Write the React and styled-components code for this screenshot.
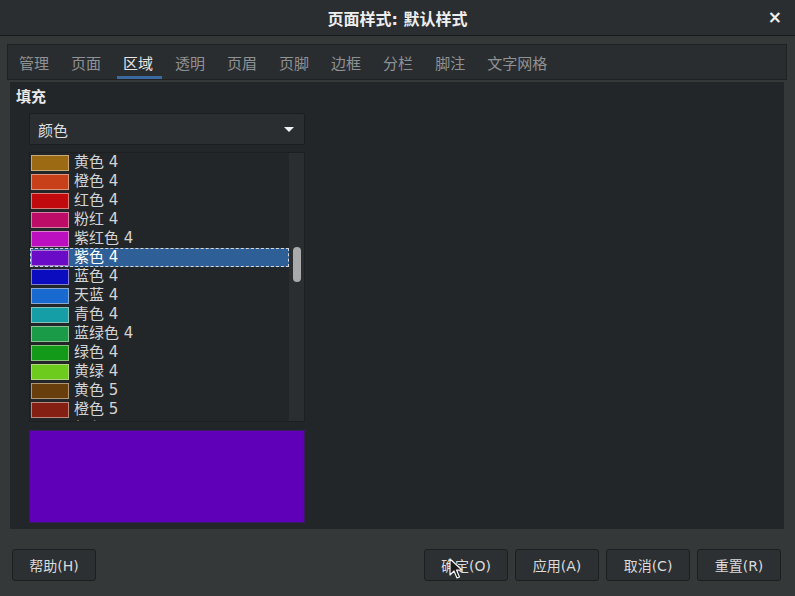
import React from "react";
import styled, { createGlobalStyle } from "styled-components";

const Global = createGlobalStyle`
  html, body { margin: 0; padding: 0; background: #353839; }
  body { font-family: "DejaVu Sans", "Noto Sans CJK SC", sans-serif; }
  * { box-sizing: border-box; }
`;

const Window = styled.div`
  position: relative;
  width: 795px;
  height: 596px;
  background: #353839;
  overflow: hidden;
  display: flex;
  flex-direction: column;
`;

const TitleBar = styled.div`
  height: 36px;
  flex: none;
  background: #2b2e31;
  border-bottom: 1px solid #17191b;
  display: flex;
  align-items: center;
  justify-content: center;
  position: relative;
  color: #eeeeee;
  font-weight: 700;
  font-size: 16px;
`;

const Close = styled.div`
  position: absolute;
  right: 13px;
  top: 8px;
  font-size: 17px;
  font-weight: 700;
  color: #f0f0f0;
  line-height: 18px;
`;

const Tabs = styled.div`
  margin: 8px 8px 0 7px;
  height: 36px;
  flex: none;
  border: 1px solid #1f2123;
  background: #2a2d30;
  display: flex;
  align-items: stretch;
`;

const Tab = styled.div`
  position: relative;
  padding: 1px 11px 0 11px;
  display: flex;
  align-items: center;
  font-size: 15px;
  color: ${(p) => (p.$active ? "#e6e6e6" : "#8f9295")};
  &::after {
    content: "";
    display: ${(p) => (p.$active ? "block" : "none")};
    position: absolute;
    left: 5px;
    right: 2px;
    bottom: 0;
    height: 3px;
    background: #3b6aa0;
  }
`;

const Panel = styled.div`
  margin: 2px 11px 0 10px;
  height: 447px;
  flex: none;
  background: #232629;
  padding: 4px 0 0 6px;
  display: flex;
  flex-direction: column;
`;

const Heading = styled.div`
  font-size: 15px;
  font-weight: 700;
  color: #e8e8e8;
  line-height: 22px;
`;

const Column = styled.div`
  margin: 5px 0 0 13px;
  width: 276px;
  display: flex;
  flex-direction: column;
`;

const Select = styled.div`
  height: 32px;
  border: 1px solid #1b1d1f;
  border-radius: 2px;
  background: #2b2e31;
  display: flex;
  align-items: center;
  justify-content: space-between;
  padding: 0 10px 0 8px;
  font-size: 15px;
  color: #dedede;
`;

const Caret = styled.div`
  width: 0;
  height: 0;
  border-left: 5px solid transparent;
  border-right: 5px solid transparent;
  border-top: 5px solid #f2f2f2;
`;

const List = styled.div`
  margin-top: 7px;
  height: 270px;
  border: 1px solid #1c1e20;
  background: #232629;
  display: flex;
  overflow: hidden;
`;

const Rows = styled.div`
  flex: 1;
  display: flex;
  flex-direction: column;
  overflow: hidden;
`;

const Row = styled.div`
  height: 19px;
  flex: none;
  display: flex;
  align-items: center;
  font-size: 15px;
  line-height: 19px;
  color: ${(p) => (p.$selected ? "#ffffff" : "#d4d4d4")};
  background: ${(p) => (p.$selected ? "#2f5f97" : "transparent")};
  outline: ${(p) => (p.$selected ? "1px dashed #d8d8d8" : "none")};
  outline-offset: -1px;
  white-space: nowrap;
`;

const Swatch = styled.div`
  width: 38px;
  height: 16px;
  flex: none;
  margin: 0 5px 0 1px;
  border: 1px solid rgba(235, 220, 205, 0.55);
  background: ${(p) => p.$c};
`;

const Scroll = styled.div`
  width: 15px;
  flex: none;
  background: #2b2e31;
  position: relative;
`;

const Thumb = styled.div`
  position: absolute;
  left: 4px;
  top: 94px;
  width: 8px;
  height: 35px;
  border-radius: 4px;
  background: #a8aaac;
`;

const Preview = styled.div`
  margin-top: 8px;
  height: 93px;
  background: ${(p) => p.$c};
  border: 1px solid #3b1a63;
`;

const Footer = styled.div`
  flex: 1;
  display: flex;
  align-items: flex-start;
  padding: 20px 14px 0 12px;
  gap: 7px;
`;

const Spacer = styled.div`
  flex: 1;
`;

const Button = styled.div`
  width: 84px;
  height: 32px;
  border: 1px solid #1c1e20;
  border-radius: 3px;
  background: #2d3033;
  display: flex;
  align-items: center;
  justify-content: center;
  font-size: 14px;
  color: #dadada;
`;

const Cursor = styled.svg`
  position: absolute;
  left: 449px;
  top: 558px;
`;

const colors = [
  ["黄色 4", "#9c6a12"],
  ["橙色 4", "#c8401a"],
  ["红色 4", "#c00a0e"],
  ["粉红 4", "#bd0c68"],
  ["紫红色 4", "#bb0fc0"],
  ["紫色 4", "#6a0bc7"],
  ["蓝色 4", "#0b0bbf"],
  ["天蓝 4", "#186ad0"],
  ["青色 4", "#169ea6"],
  ["蓝绿色 4", "#199b48"],
  ["绿色 4", "#139a19"],
  ["黄绿 4", "#6dcb1e"],
  ["黄色 5", "#683e0d"],
  ["橙色 5", "#832013"],
  ["红色 5", "#7a0a0c"],
];

const tabs = ["管理", "页面", "区域", "透明", "页眉", "页脚", "边框", "分栏", "脚注", "文字网格"];

export default function App() {
  return (
    <Window>
      <Global />
      <TitleBar>
        页面样式: 默认样式
        <Close>×</Close>
      </TitleBar>
      <Tabs>
        {tabs.map((t) => (
          <Tab key={t} $active={t === "区域"}>
            {t}
          </Tab>
        ))}
      </Tabs>
      <Panel>
        <Heading>填充</Heading>
        <Column>
          <Select>
            颜色
            <Caret />
          </Select>
          <List>
            <Rows>
              {colors.map(([n, c]) => (
                <Row key={n} $selected={n === "紫色 4"}>
                  <Swatch $c={c} />
                  {n}
                </Row>
              ))}
            </Rows>
            <Scroll>
              <Thumb />
            </Scroll>
          </List>
          <Preview $c="#5f00b8" />
        </Column>
      </Panel>
      <Footer>
        <Button>帮助(H)</Button>
        <Spacer />
        <Button>确定(O)</Button>
        <Button>应用(A)</Button>
        <Button>取消(C)</Button>
        <Button>重置(R)</Button>
      </Footer>
      <Cursor width="14" height="22" viewBox="0 0 14 22">
        <path d="M1 1 L1 17 L5 13 L8 20 L10.5 19 L7.5 12 L13 12 Z" fill="#1a1a1a" stroke="#f4f4f4" strokeWidth="1.2" strokeLinejoin="round" />
      </Cursor>
    </Window>
  );
}
